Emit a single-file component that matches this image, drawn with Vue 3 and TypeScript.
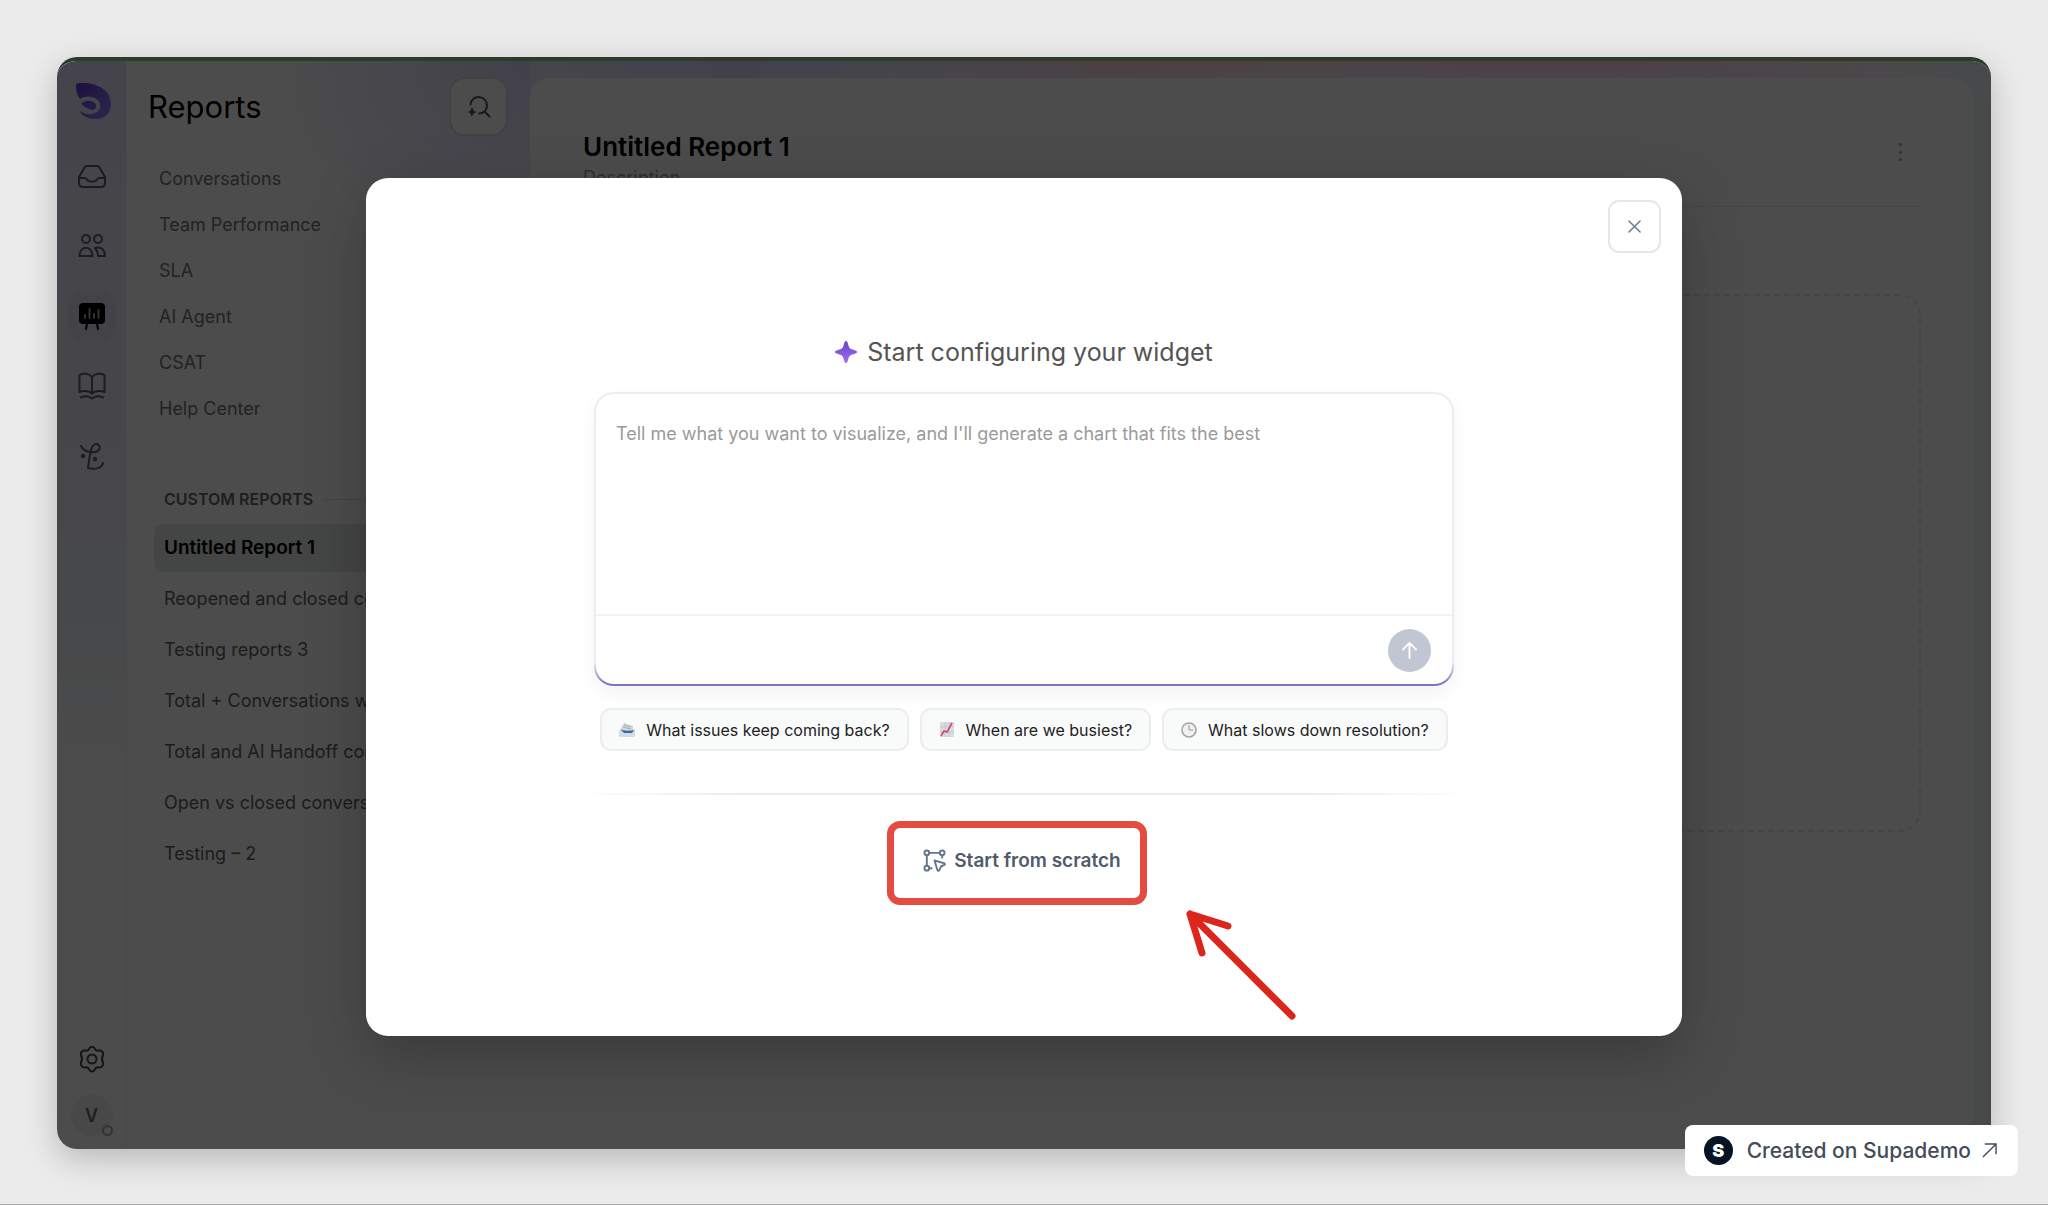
<script setup lang="ts">
import { ref } from 'vue'

interface Chip {
  icon: 'tray' | 'chart' | 'clock'
  label: string
}

const prompt = ref('')

const reports: string[] = ['Conversations', 'Team Performance', 'SLA', 'AI Agent', 'CSAT', 'Help Center']

const customReports: string[] = [
  'Untitled Report 1',
  'Reopened and closed conversations',
  'Testing reports 3',
  'Total + Conversations with tags',
  'Total and AI Handoff conversations',
  'Open vs closed conversations',
  'Testing – 2',
]

const chips: Chip[] = [
  { icon: 'tray', label: 'What issues keep coming back?' },
  { icon: 'chart', label: 'When are we busiest?' },
  { icon: 'clock', label: 'What slows down resolution?' },
]
</script>

<template>
  <div class="page">
    <div class="frame">
      <nav class="rail" aria-label="Main">
        <svg class="logo" viewBox="0 0 36 36" aria-hidden="true">
          <defs>
            <linearGradient id="logoFill" x1="0" y1="0" x2="1" y2="1">
              <stop offset="0" stop-color="#5a35d8" />
              <stop offset="1" stop-color="#9a86ff" />
            </linearGradient>
          </defs>
          <path
            d="M0 3C0 1 1 0 3 0C21-1 35 7 35 21C35 30 29 36 20 36C12 36 6 33 3 27C7 31 12 32 16 31C22 30 25 26 24 21C22 14 12 11 4 16C1 12 0 8 0 3Z"
            fill="url(#logoFill)"
          />
          <path d="M5 21C9 16 18 17 20 22C21 26 17 28 13 26C10 25 8 23 5 21Z" fill="#7558e8" />
        </svg>

        <div class="rail-items">
          <a class="tile" href="#inbox" aria-label="Inbox">
            <svg viewBox="0 0 28 28" class="line">
              <path d="M6.500 5.500C7 4.500 8 4 9 4H19C20 4 21 4.500 21.500 5.500L27 15V21C27 23.500 25.500 25 23 25H5C2.500 25 1 23.500 1 21V15Z" />
              <path d="M1 16H7C8.500 16 9 17 9.500 18C10 19 10.500 19.500 12 19.500H16C17.500 19.500 18 19 18.500 18C19 17 19.500 16 21 16H27" />
            </svg>
          </a>
          <a class="tile" href="#contacts" aria-label="Contacts">
            <svg viewBox="0 0 28 28" class="line">
              <circle cx="8" cy="7" r="4" />
              <circle cx="20" cy="7" r="4" />
              <path d="M1.500 24C1.500 13 14.500 13 14.500 24Z" />
              <path d="M17 16C23 14 27 18 27 24H20C20 20 19 18 17 16Z" />
            </svg>
          </a>
          <a class="tile active" href="#reports" aria-label="Reports" aria-current="page">
            <svg viewBox="0 0 28 28">
              <rect x="1" y="1" width="26" height="21" rx="4" fill="#000" />
              <path d="M9 22L8 27M19 22L20 27" stroke="#000" stroke-width="2" stroke-linecap="round" />
              <path d="M7 13V16M11.500 7V16M16 12V16M20.500 8V16" stroke="#b5b5bd" stroke-width="1.800" stroke-linecap="round" />
            </svg>
          </a>
          <a class="tile" href="#docs" aria-label="Help center">
            <svg viewBox="0 0 28 28" class="line">
              <path d="M14 5C11 1 5 1 1.500 3V20C5 18.500 11 18.500 14 21.500C17 18.500 23 18.500 26.500 20V3C23 1 17 1 14 5ZM14 5V21" />
              <path d="M3 25.500C7 23.500 11 24 14 26.500C17 24 21 23.500 25 25.500" />
            </svg>
          </a>
          <a class="tile" href="#agent" aria-label="AI agent">
            <svg viewBox="0 0 28 28" class="line">
              <path d="M3 4C5 9 12 11 17 10C23 9 23 2 18 2C13 2 12 12 10 26C17 28 24 26 25 21" />
              <circle cx="5" cy="14" r="1.200" fill="currentColor" />
              <circle cx="17" cy="17" r="1.200" fill="currentColor" />
            </svg>
          </a>
        </div>

        <div class="rail-foot">
          <a class="gear" href="#settings" aria-label="Settings">
            <svg viewBox="0 0 28 28" class="line">
              <path
                d="M11.200 3.500C12.200 1 15.800 1 16.800 3.500C17.500 5.500 18.800 6 20.800 5.600C23.500 5.200 26 7.500 25 10.200C23.800 12.500 23.800 15.500 25 17.800C26 20.500 23.500 22.800 20.800 22.400C18.800 22 17.500 22.500 16.800 24.500C15.800 27 12.200 27 11.200 24.500C10.500 22.500 9.200 22 7.200 22.400C4.500 22.800 2 20.500 3 17.800C4.200 15.500 4.200 12.500 3 10.200C2 7.500 4.500 5.200 7.200 5.600C9.200 6 10.500 5.500 11.200 3.500Z"
              />
              <circle cx="14" cy="14" r="4.500" />
            </svg>
          </a>
          <div class="avatar">V<span class="status"></span></div>
        </div>
      </nav>

      <aside class="sidebar">
        <header class="side-head">
          <h1>Reports</h1>
          <button class="search" type="button" aria-label="Search">
            <svg viewBox="0 0 24 24" class="line">
              <path d="M3.500 9.500C4 5 7.500 2 11.500 2C16 2 20 5.500 20 10.500C20 15 16.500 18.500 12 18.500M17.500 16.500L22.500 21.500" />
              <path d="M5 12L6.500 15.500L9.500 17L6.500 18.500L5 22L3.500 18.500L1 17L3.500 15.500Z" fill="currentColor" stroke="none" />
            </svg>
          </button>
        </header>
        <ul class="nav">
          <li v-for="item in reports" :key="item"><a href="#report">{{ item }}</a></li>
        </ul>
        <h2 class="group">CUSTOM REPORTS</h2>
        <ul class="custom">
          <li v-for="(item, i) in customReports" :key="item">
            <a href="#custom" :class="{ current: i === 0 }">{{ item }}</a>
          </li>
        </ul>
      </aside>

      <main class="card">
        <header class="card-head">
          <div>
            <h2>Untitled Report 1</h2>
            <p>Description</p>
          </div>
          <button class="kebab" type="button" aria-label="More"><i></i><i></i><i></i></button>
        </header>
        <div class="dropzone"></div>
      </main>

      <div class="overlay">
        <section class="modal" role="dialog" aria-labelledby="dialog-title">
          <button class="close" type="button" aria-label="Close">
            <svg viewBox="0 0 14 14"><path d="M1 1L13 13M13 1L1 13" /></svg>
          </button>

          <h2 id="dialog-title" class="title">
            <svg viewBox="0 0 22 22" aria-hidden="true">
              <defs>
                <linearGradient id="spark" x1="0" y1="0" x2="0" y2="1">
                  <stop offset="0" stop-color="#6a44c4" />
                  <stop offset="1" stop-color="#9a70f0" />
                </linearGradient>
              </defs>
              <path d="M11 0C12 0 12.500 1 13 3C14 7 15 8 19 9C21 9.500 22 10 22 11C22 12 21 12.500 19 13C15 14 14 15 13 19C12.500 21 12 22 11 22C10 22 9.500 21 9 19C8 15 7 14 3 13C1 12.500 0 12 0 11C0 10 1 9.500 3 9C7 8 8 7 9 3C9.500 1 10 0 11 0Z" fill="url(#spark)" />
            </svg>
            Start configuring your widget
          </h2>

          <form class="composer" @submit.prevent>
            <textarea
              v-model="prompt"
              aria-label="Widget prompt"
              placeholder="Tell me what you want to visualize, and I'll generate a chart that fits the best"
            ></textarea>
            <div class="composer-foot">
              <button class="send" type="submit" aria-label="Send">
                <svg viewBox="0 0 20 20"><path d="M10 18V2M3 9L10 2L17 9" /></svg>
              </button>
            </div>
          </form>

          <div class="chips">
            <button v-for="chip in chips" :key="chip.label" class="chip" type="button">
              <svg v-if="chip.icon === 'tray'" viewBox="0 0 16 16" aria-hidden="true">
                <path d="M2 6L5 1L14 4L14 9L2 9Z" fill="#d3d5d8" />
                <path d="M5 3L12 5M4 5L12 7" stroke="#a9adb3" stroke-width="1" />
                <path d="M0 8L16 7V14C16 15 15 15 15 15H1C0 15 0 14 0 14Z" fill="#d5dbe2" />
                <path d="M1 7C4 9 11 9 15 8L13 11H5Z" fill="#2f6fa6" />
              </svg>
              <svg v-else-if="chip.icon === 'chart'" viewBox="0 0 16 16" aria-hidden="true">
                <rect x="1" y="0" width="14" height="15" fill="#d8dbe4" />
                <path d="M1 5H15M1 10H15M6 0V15M10 0V15" stroke="#c3c8d4" stroke-width="1" />
                <path d="M2 14L5 9L8 10L13 1" fill="none" stroke="#cf4a62" stroke-width="1.600" />
              </svg>
              <svg v-else viewBox="0 0 16 16" aria-hidden="true">
                <circle cx="8" cy="8" r="7" fill="#f1f1f1" stroke="#a3a3a3" stroke-width="1.600" />
                <path d="M8 3V8H12" fill="none" stroke="#9a9a9a" stroke-width="1" />
              </svg>
              {{ chip.label }}
            </button>
          </div>

          <hr class="rule" />

          <div class="scratch-wrap">
            <button class="scratch" type="button">
              <svg viewBox="0 0 24 24" aria-hidden="true">
                <circle cx="4" cy="4" r="2.500" />
                <circle cx="20" cy="4" r="2.500" />
                <circle cx="4" cy="20" r="2.500" />
                <path d="M6.500 4H17.500M4 6.500V17.500M20 6.500V9M6.500 20H9" />
                <path d="M12 12L22.500 15C23 15.500 23 16 22.500 16.500L19 18L17 22C16.500 23 15.500 23 15 22Z" />
              </svg>
              Start from scratch
            </button>
            <div class="highlight"></div>
            <svg class="arrow" viewBox="0 0 112 112" aria-hidden="true">
              <path d="M107 107L5 5M43 17L5 5L17 44" />
            </svg>
          </div>
        </section>
      </div>
    </div>

    <a class="badge" href="#supademo">
      <span class="badge-mark">S</span>
      Created on Supademo
      <svg viewBox="0 0 16 16" aria-hidden="true"><path d="M1 15L15 1M3 1H15V12" /></svg>
    </a>
  </div>
</template>

<style>
body {
  margin: 0;
}
</style>

<style scoped>
* {
  box-sizing: border-box;
}

.page {
  position: relative;
  display: flex;
  min-height: 100vh;
  padding: 57px 57px 55px;
  border-bottom: 1px solid #a9a9a9;
  background: #ebebeb;
  font-family: Inter, "Liberation Sans", sans-serif;
}

a {
  color: inherit;
  text-decoration: none;
}

button {
  padding: 0;
  font: inherit;
  cursor: pointer;
}

h1,
h2,
p,
ul {
  margin: 0;
  padding: 0;
  list-style: none;
}

svg {
  display: block;
  overflow: visible;
}

.line {
  fill: none;
  stroke: currentColor;
  stroke-width: 2;
  stroke-linecap: round;
  stroke-linejoin: round;
}

.frame {
  position: relative;
  display: flex;
  flex: 1;
  min-width: 0;
  overflow: hidden;
  border-top: 4px solid #303a2b;
  border-radius: 20px;
  background:
    linear-gradient(90deg, transparent 97%, #edf4fa 98%),
    radial-gradient(ellipse 420px 90px at 35% 0, #ded6ff, transparent),
    radial-gradient(ellipse 260px 60px at 56% 0, #ffd2dc, transparent),
    radial-gradient(ellipse 400px 50px at 77% 0, #ffd2ea, transparent),
    #f8f6fa;
  box-shadow: 0 10px 32px rgba(0, 0, 0, 0.22);
}

.rail {
  display: flex;
  flex: none;
  flex-direction: column;
  align-items: center;
  width: 70px;
  padding: 22px 0 13px;
  border-right: 1px solid #f2f2f4;
  background: linear-gradient(180deg, #e6e3fd 0, #ebe9f6 260px, #eef2f6 560px, #ffffff 720px);
  color: #5f5d72;
}

.logo {
  width: 36px;
  height: 36px;
  margin: 0 0 33px 5px;
}

.rail-items {
  display: flex;
  flex-direction: column;
  gap: 22px;
}

.tile {
  display: grid;
  place-items: center;
  width: 48px;
  height: 48px;
  border-radius: 16px;
}

.tile.active {
  background: #dfdce9;
}

.tile svg,
.gear svg {
  width: 28px;
  height: 28px;
}

.rail-foot {
  display: flex;
  flex-direction: column;
  align-items: center;
  gap: 21px;
  margin-top: auto;
  color: #444444;
}

.avatar {
  position: relative;
  display: grid;
  place-items: center;
  width: 42px;
  height: 42px;
  border-radius: 50%;
  background: #f2f2f2;
  color: #6a6a6a;
  font-size: 18px;
  font-weight: 600;
}

.status {
  position: absolute;
  right: 0;
  bottom: 0;
  width: 11px;
  height: 11px;
  border: 2px solid #aaaaaa;
  border-radius: 50%;
}

.sidebar {
  flex: none;
  width: 403px;
  padding: 16px 22px 0 21px;
  background: radial-gradient(ellipse 260px 220px at 100% 0, #dcd8fb, #ffffff);
}

.side-head {
  display: flex;
  align-items: center;
  justify-content: space-between;
  margin-bottom: 20px;
}

.side-head h1 {
  font-size: 31px;
  font-weight: 400;
  line-height: 40px;
}

.search {
  display: grid;
  place-items: center;
  width: 59px;
  height: 59px;
  border: 2px solid #dadae4;
  border-radius: 16px;
  background: #ffffff;
  color: #555555;
}

.search svg {
  width: 24px;
  height: 24px;
}

.nav a {
  display: block;
  padding-left: 11px;
  color: #747474;
  font-size: 18px;
  line-height: 46px;
}

.group {
  display: flex;
  align-items: center;
  gap: 10px;
  height: 30px;
  margin-top: 52px;
  padding-left: 16px;
  color: #66666f;
  font-size: 16px;
  font-weight: 600;
}

.group::after {
  flex: 1;
  height: 1px;
  background: #e4e4e4;
  content: "";
}

.custom {
  display: flex;
  flex-direction: column;
  gap: 3px;
  margin-top: 10px;
  padding-left: 6px;
}

.custom a {
  display: block;
  overflow: hidden;
  padding: 0 10px;
  border-radius: 8px;
  color: #606060;
  font-size: 18px;
  line-height: 48px;
  text-overflow: ellipsis;
  white-space: nowrap;
}

.custom a.current {
  background: #e4e6e6;
  color: #000000;
  font-size: 19px;
  font-weight: 600;
}

.card {
  flex: 1;
  min-width: 0;
  margin: 17px 18px 0 0;
  padding: 0 52px 0 53px;
  border-radius: 20px 20px 0 0;
  background: #ffffff;
}

.card-head {
  display: flex;
  align-items: flex-start;
  justify-content: space-between;
  height: 129px;
  padding-top: 51px;
  border-bottom: 1px solid #eaeaea;
}

.card-head h2 {
  font-size: 26px;
  font-weight: 600;
  line-height: 36px;
}

.card-head p {
  color: #999999;
  font-size: 18px;
  line-height: 26px;
}

.kebab {
  display: flex;
  flex-direction: column;
  align-items: center;
  justify-content: space-between;
  width: 42px;
  height: 18px;
  margin-top: 14px;
  border: 0;
  background: none;
}

.kebab i {
  width: 3px;
  height: 3px;
  border-radius: 50%;
  background: #a4a4a4;
}

.dropzone {
  height: 538px;
  margin-top: 87px;
  border: 2px dashed #e6e6e6;
  border-radius: 22px;
}

.overlay {
  position: absolute;
  inset: 0;
  display: flex;
  align-items: flex-start;
  justify-content: center;
  padding-top: 117px;
  background: rgba(0, 0, 0, 0.7);
}

.modal {
  position: relative;
  display: flex;
  flex-direction: column;
  align-items: center;
  width: 68%;
  padding: 156px 20px 153px;
  border-radius: 22px;
  background: #ffffff;
  box-shadow: 0 20px 60px rgba(0, 0, 0, 0.25);
}

.close {
  position: absolute;
  top: 22px;
  right: 21px;
  display: grid;
  place-items: center;
  width: 53px;
  height: 53px;
  border: 2px solid #e4e7e8;
  border-radius: 11px;
  background: #ffffff;
}

.close svg {
  width: 13px;
  height: 13px;
  fill: none;
  stroke: #6b7c8c;
  stroke-width: 1.600;
  stroke-linecap: round;
}

.title {
  display: flex;
  align-items: center;
  gap: 10px;
  color: #555555;
  font-size: 25px;
  font-weight: 400;
  line-height: 36px;
}

.title svg {
  width: 22px;
  height: 22px;
}

.composer {
  display: flex;
  flex-direction: column;
  width: 100%;
  max-width: 860px;
  margin-top: 22px;
  overflow: hidden;
  border: 2px solid transparent;
  border-radius: 20px;
  background:
    linear-gradient(#ffffff, #ffffff) padding-box,
    linear-gradient(180deg, #ededf0 0, #ededf0 calc(100% - 24px), #8470bd calc(100% - 2px)) border-box;
  box-shadow: 0 8px 18px rgba(0, 0, 0, 0.05);
}

textarea {
  height: 222px;
  padding: 26px 20px;
  border: 0;
  border-bottom: 2px solid #f3f3f4;
  outline: 0;
  background: none;
  color: #333333;
  font: 18px/28px Inter, "Liberation Sans", sans-serif;
  resize: none;
}

textarea::placeholder {
  color: #9a9a9a;
}

.composer-foot {
  display: flex;
  align-items: center;
  justify-content: flex-end;
  height: 68px;
  padding-right: 21px;
}

.send {
  display: grid;
  place-items: center;
  width: 43px;
  height: 43px;
  border: 0;
  border-radius: 50%;
  background: #c0c6d2;
}

.send svg {
  width: 19px;
  height: 19px;
  fill: none;
  stroke: #ffffff;
  stroke-width: 2;
  stroke-linecap: round;
  stroke-linejoin: round;
}

.chips {
  display: flex;
  gap: 11px;
  margin-top: 22px;
}

.chip {
  display: flex;
  align-items: center;
  gap: 11px;
  height: 43px;
  padding: 0 17px;
  border: 2px solid #eceeee;
  border-radius: 11px;
  background: #f9fafa;
  color: #222222;
  font-size: 16px;
}

.chip svg {
  width: 16px;
  height: 16px;
}

.rule {
  width: 100%;
  max-width: 904px;
  height: 2px;
  margin: 42px 0 0;
  border: 0;
  background: linear-gradient(90deg, transparent, #e9ebec 20%, #e9ebec 80%, transparent);
}

.scratch-wrap {
  position: relative;
  margin-top: 42px;
}

.scratch {
  display: flex;
  align-items: center;
  gap: 8px;
  height: 46px;
  padding: 0 20px 0 16px;
  border: 0;
  background: none;
  color: #4f5a6b;
  font-size: 19px;
  font-weight: 600;
}

.scratch svg {
  width: 23px;
  height: 23px;
  fill: none;
  stroke: #66758b;
  stroke-width: 2;
  stroke-linecap: round;
  stroke-linejoin: round;
}

.highlight {
  position: absolute;
  inset: -16px -6px -22px -20px;
  border: 7px solid #e44b41;
  border-radius: 13px;
  pointer-events: none;
}

.arrow {
  position: absolute;
  top: 72px;
  left: 278px;
  width: 112px;
  height: 112px;
  fill: none;
  stroke: #dc261c;
  stroke-width: 7;
  stroke-linecap: round;
  stroke-linejoin: round;
}

.badge {
  position: absolute;
  right: 30px;
  bottom: 28px;
  display: flex;
  align-items: center;
  gap: 11px;
  height: 51px;
  padding: 0 21px 0 19px;
  border-radius: 8px;
  background: #ffffff;
  color: #434c58;
  font-size: 21px;
  font-weight: 500;
}

.badge-mark {
  display: grid;
  place-items: center;
  width: 29px;
  height: 29px;
  margin-right: 3px;
  border-radius: 50%;
  background: #061322;
  color: #ffffff;
  font-size: 18px;
  font-weight: 900;
}

.badge svg {
  width: 15px;
  height: 15px;
  fill: none;
  stroke: #434c58;
  stroke-width: 1.500;
}
</style>
